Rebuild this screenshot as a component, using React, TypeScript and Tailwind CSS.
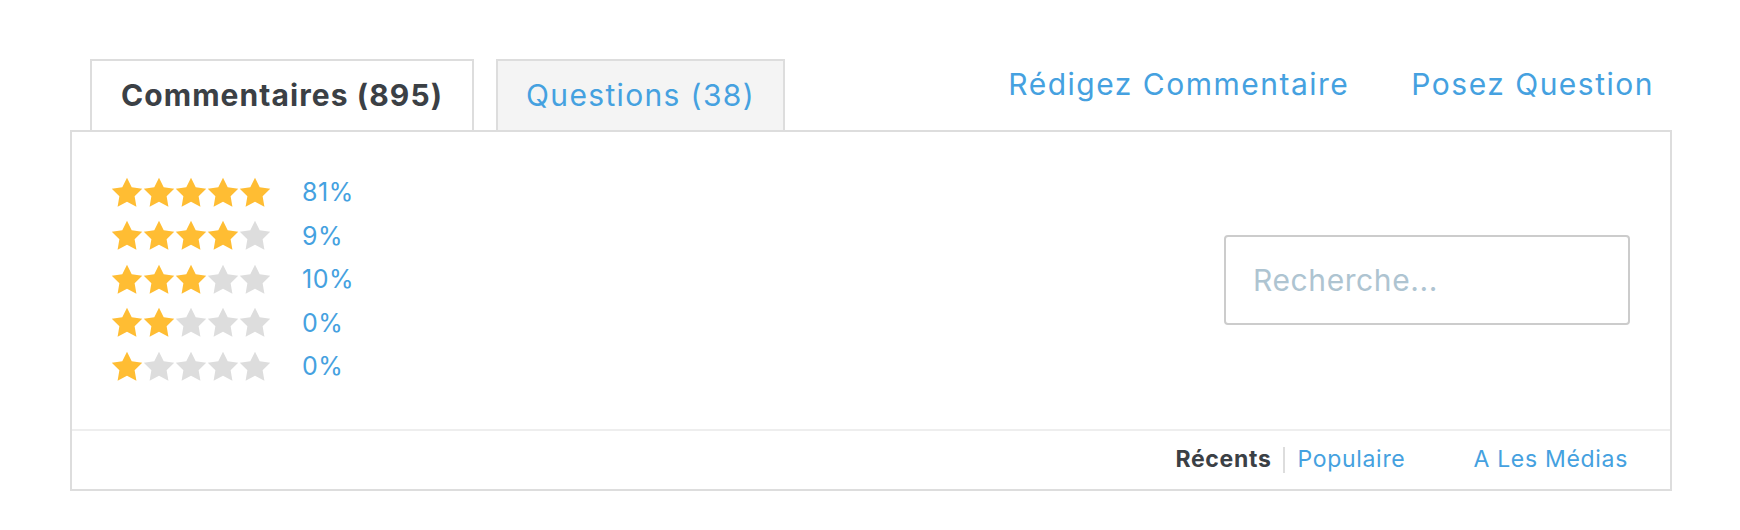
import React from "react";

const ratings = [
  { stars: 5, pct: "81%" },
  { stars: 4, pct: "9%" },
  { stars: 3, pct: "10%" },
  { stars: 2, pct: "0%" },
  { stars: 1, pct: "0%" },
];

function Star({ filled }: { filled: boolean }) {
  return (
    <svg width="32" height="32" viewBox="1.5 1.5 21 21" className="block">
      <path
        d="M12 2l3.09 6.26L22 9.27l-5 4.87 1.18 6.88L12 17.77l-6.18 3.25L7 14.14 2 9.27l6.91-1.01L12 2z"
        fill={filled ? "#ffbd33" : "#dddddd"}
      />
    </svg>
  );
}

export default function App() {
  return (
    <div
      className="min-h-screen bg-white pt-[59px] pl-[70px] pr-[68px]"
      style={{ fontFamily: "Inter, 'Noto Sans', sans-serif" }}
    >
      {/* Tabs + actions */}
      <div className="flex items-end">
        <div className="ml-[20px] flex items-end gap-[22px]">
          <div className="flex h-[71px] w-[384px] items-center justify-center border-2 border-b-0 border-[#dddddd] bg-white text-[30px] font-bold tracking-[0.036em] text-[#3b4045]">
            Commentaires (895)
          </div>
          <div className="flex h-[71px] w-[289px] items-center justify-center border-2 border-b-0 border-[#dddddd] bg-[#f4f4f4] text-[30px] tracking-[0.045em] text-[#45a1e0]">
            Questions (38)
          </div>
        </div>
        <div className="ml-auto mr-[18px] flex gap-[62px] self-start pt-[3px] text-[30px] tracking-[0.05em] text-[#45a1e0]">
          <a href="#">Rédigez Commentaire</a>
          <a href="#">Posez Question</a>
        </div>
      </div>

      {/* Panel */}
      <div className="border-2 border-[#dddddd]">
        <div className="flex items-center justify-between pl-[39px] pr-[40px] pt-[39px] pb-[40px]">
          <div className="flex flex-col">
            {ratings.map((r) => (
              <div key={r.stars} className="flex h-[43.5px] items-center">
                <div className="flex">
                  {[1, 2, 3, 4, 5].map((i) => (
                    <Star key={i} filled={i <= r.stars} />
                  ))}
                </div>
                <span className="ml-[31px] text-[25px] tracking-[0.02em] text-[#45a1e0]">
                  {r.pct}
                </span>
              </div>
            ))}
          </div>
          <input
            type="text"
            placeholder="Recherche..."
            className="h-[90px] w-[406px] rounded-[4px] border-2 border-[#cccccc] px-[27px] text-[30px] tracking-[0.02em] text-[#3b4045] outline-none placeholder:text-[#aec4d1]"
          />
        </div>
        <div className="flex h-[60px] items-center justify-end border-t-2 border-[#eeeeee] pr-[42px] text-[23px] tracking-[0.03em]">
          <span className="font-bold text-[#3b4045]">Récents</span>
          <span className="mx-[12px] h-[26px] w-[2px] bg-[#dddddd]" />
          <a href="#" className="text-[#45a1e0]">
            Populaire
          </a>
          <a href="#" className="ml-[68px] text-[#45a1e0]">
            A Les Médias
          </a>
        </div>
      </div>
    </div>
  );
}
